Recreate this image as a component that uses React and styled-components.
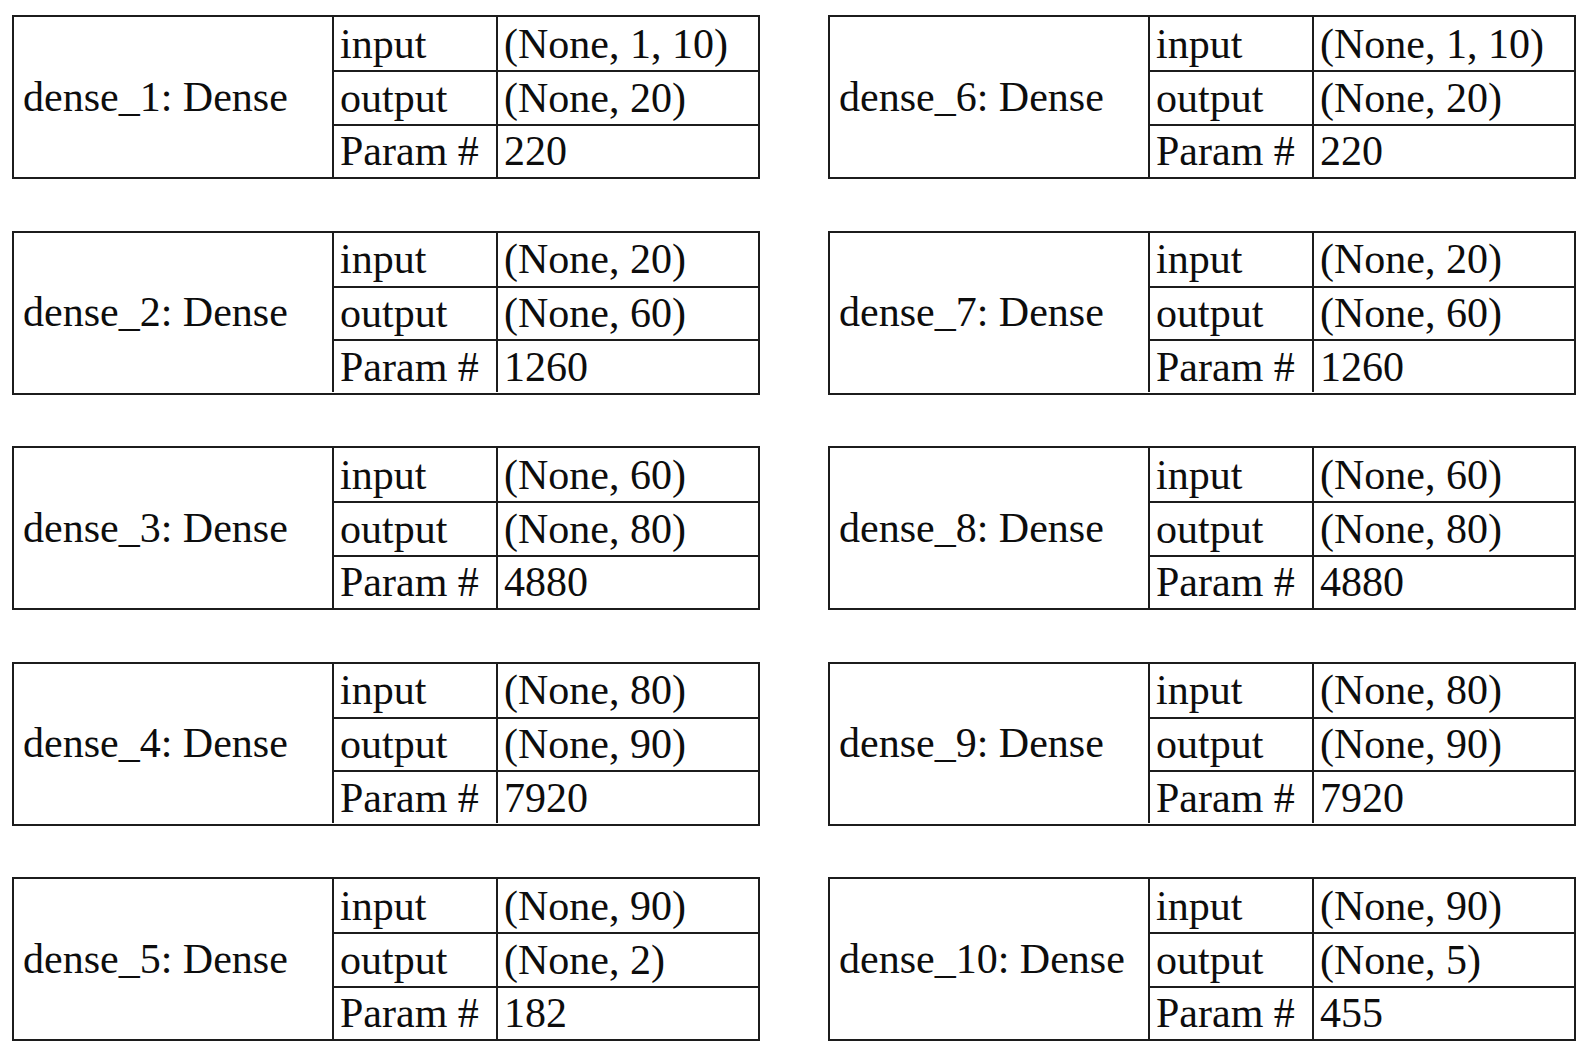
import React from "react";
import styled, { createGlobalStyle } from "styled-components";

const layers = [
  { name: "dense_1", input: "(None, 1, 10)", output: "(None, 20)", params: "220" },
  { name: "dense_6", input: "(None, 1, 10)", output: "(None, 20)", params: "220" },
  { name: "dense_2", input: "(None, 20)", output: "(None, 60)", params: "1260" },
  { name: "dense_7", input: "(None, 20)", output: "(None, 60)", params: "1260" },
  { name: "dense_3", input: "(None, 60)", output: "(None, 80)", params: "4880" },
  { name: "dense_8", input: "(None, 60)", output: "(None, 80)", params: "4880" },
  { name: "dense_4", input: "(None, 80)", output: "(None, 90)", params: "7920" },
  { name: "dense_9", input: "(None, 80)", output: "(None, 90)", params: "7920" },
  { name: "dense_5", input: "(None, 90)", output: "(None, 2)", params: "182" },
  { name: "dense_10", input: "(None, 90)", output: "(None, 5)", params: "455" },
];

const GlobalStyle = createGlobalStyle`
  body {
    margin: 0;
    background: #ffffff;
    font-family: "Liberation Serif", "Times New Roman", serif;
    color: #0d0d0d;
  }
`;

const Page = styled.div`
  display: grid;
  grid-template-columns: 748px 748px;
  column-gap: 68px;
  row-gap: 51.5px;
  padding: 15px 0 0 12px;
`;

const LayerBox = styled.div`
  box-sizing: border-box;
  width: 748px;
  height: 164px;
  display: grid;
  grid-template-columns: 318px 164px 1fr;
  grid-template-rows: repeat(3, 1fr);
  border: 2px solid #1c1c1c;
  font-size: 42px;
`;

const NameCell = styled.div`
  grid-row: 1 / 4;
  display: flex;
  align-items: center;
  padding-left: 9px;
  white-space: nowrap;
`;

const Cell = styled.div`
  box-sizing: border-box;
  display: flex;
  align-items: center;
  padding-left: 6px;
  border-left: 2px solid #1c1c1c;
  border-top: ${(p) => (p.$first ? "none" : "2px solid #1c1c1c")};
  white-space: nowrap;
`;

const Layer = ({ name, input, output, params }) => (
  <LayerBox>
    <NameCell>{name}: Dense</NameCell>
    <Cell $first>input</Cell>
    <Cell $first>{input}</Cell>
    <Cell>output</Cell>
    <Cell>{output}</Cell>
    <Cell>Param #</Cell>
    <Cell>{params}</Cell>
  </LayerBox>
);

export default function App() {
  return (
    <>
      <GlobalStyle />
      <Page>
        {layers.map((l) => (
          <Layer key={l.name} {...l} />
        ))}
      </Page>
    </>
  );
}
